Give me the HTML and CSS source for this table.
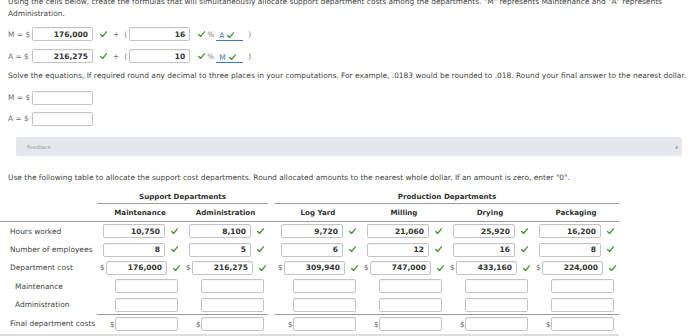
FILE: index.html
```html
<!DOCTYPE html>
<html>
<head>
<meta charset="utf-8">
<link rel="stylesheet" href="styles.css">
</head>
<body>
<div class="page">
  <p class="intro">Using the cells below, create the formulas that will simultaneously allocate support department costs among the departments. "M" represents Maintenance and "A" represents<br>Administration.</p>

  <div class="eq-row">
    <span class="lbl">M = $</span>
    <span class="box eq-box">176,000</span>
    <svg class="chk g7" viewBox="0 0 7 6"><polyline points="0.6,3.2 2.6,5.2 6.4,0.6"/></svg>
    <span class="op g6">+</span>
    <span class="op g5">(</span>
    <span class="box eq-box g2">16</span>
    <svg class="chk g8" viewBox="0 0 7 6"><polyline points="0.6,3.2 2.6,5.2 6.4,0.6"/></svg>
    <span class="op g2">%</span>
    <span class="ref g2"><span class="ref-letter">A</span><svg class="chk" viewBox="0 0 7 6"><polyline points="0.6,3.2 2.6,5.2 6.4,0.6"/></svg></span>
    <span class="op g5">)</span>
  </div>

  <div class="eq-row">
    <span class="lbl">A = $</span>
    <span class="box eq-box">216,275</span>
    <svg class="chk g7" viewBox="0 0 7 6"><polyline points="0.6,3.2 2.6,5.2 6.4,0.6"/></svg>
    <span class="op g6">+</span>
    <span class="op g5">(</span>
    <span class="box eq-box g2">10</span>
    <svg class="chk g8" viewBox="0 0 7 6"><polyline points="0.6,3.2 2.6,5.2 6.4,0.6"/></svg>
    <span class="op g2">%</span>
    <span class="ref g2"><span class="ref-letter">M</span><svg class="chk" viewBox="0 0 7 6"><polyline points="0.6,3.2 2.6,5.2 6.4,0.6"/></svg></span>
    <span class="op g5">)</span>
  </div>

  <p class="solve">Solve the equations, If required round any decimal to three places in your computations. For example, .0183 would be rounded to .018. Round your final answer to the nearest dollar.</p>

  <div class="ans-row"><span class="lbl">M = $</span><span class="box eq-box"></span></div>
  <div class="ans-row"><span class="lbl">A = $</span><span class="box eq-box"></span></div>

  <div class="feedback"><span class="fb-text">Feedback</span><span class="caret">&#9650;</span></div>

  <p class="instr">Use the following table to allocate the support cost departments. Round allocated amounts to the nearest whole dollar. If an amount is zero, enter "0".</p>

  <div class="table">
    <div class="row group-row">
      <div></div>
      <div class="group support">Support Departments</div>
      <div></div>
      <div class="group production">Production Departments</div>
    </div>
    <div class="row head-row">
      <div></div>
      <div class="colh">Maintenance</div>
      <div class="colh">Administration</div>
      <div></div>
      <div class="colh">Log Yard</div>
      <div class="colh">Milling</div>
      <div class="colh">Drying</div>
      <div class="colh">Packaging</div>
    </div>

    <div class="row data-row">
      <div class="rlabel">Hours worked</div>
      <div class="cell c-val"><span class="box tb-box">10,750</span><svg class="chk" viewBox="0 0 7 6"><polyline points="0.6,3.2 2.6,5.2 6.4,0.6"/></svg></div>
      <div class="cell c-val"><span class="box tb-box">8,100</span><svg class="chk" viewBox="0 0 7 6"><polyline points="0.6,3.2 2.6,5.2 6.4,0.6"/></svg></div>
      <div></div>
      <div class="cell c-val"><span class="box tb-box">9,720</span><svg class="chk" viewBox="0 0 7 6"><polyline points="0.6,3.2 2.6,5.2 6.4,0.6"/></svg></div>
      <div class="cell c-val"><span class="box tb-box">21,060</span><svg class="chk" viewBox="0 0 7 6"><polyline points="0.6,3.2 2.6,5.2 6.4,0.6"/></svg></div>
      <div class="cell c-val"><span class="box tb-box">25,920</span><svg class="chk" viewBox="0 0 7 6"><polyline points="0.6,3.2 2.6,5.2 6.4,0.6"/></svg></div>
      <div class="cell c-val"><span class="box tb-box">16,200</span><svg class="chk" viewBox="0 0 7 6"><polyline points="0.6,3.2 2.6,5.2 6.4,0.6"/></svg></div>
    </div>

    <div class="row data-row">
      <div class="rlabel">Number of employees</div>
      <div class="cell c-val"><span class="box tb-box">8</span><svg class="chk" viewBox="0 0 7 6"><polyline points="0.6,3.2 2.6,5.2 6.4,0.6"/></svg></div>
      <div class="cell c-val"><span class="box tb-box">5</span><svg class="chk" viewBox="0 0 7 6"><polyline points="0.6,3.2 2.6,5.2 6.4,0.6"/></svg></div>
      <div></div>
      <div class="cell c-val"><span class="box tb-box">6</span><svg class="chk" viewBox="0 0 7 6"><polyline points="0.6,3.2 2.6,5.2 6.4,0.6"/></svg></div>
      <div class="cell c-val"><span class="box tb-box">12</span><svg class="chk" viewBox="0 0 7 6"><polyline points="0.6,3.2 2.6,5.2 6.4,0.6"/></svg></div>
      <div class="cell c-val"><span class="box tb-box">16</span><svg class="chk" viewBox="0 0 7 6"><polyline points="0.6,3.2 2.6,5.2 6.4,0.6"/></svg></div>
      <div class="cell c-val"><span class="box tb-box">8</span><svg class="chk" viewBox="0 0 7 6"><polyline points="0.6,3.2 2.6,5.2 6.4,0.6"/></svg></div>
    </div>

    <div class="row data-row">
      <div class="rlabel">Department cost</div>
      <div class="cell c-cost"><span class="dol">$</span><span class="box cost-box">176,000</span><svg class="chk" viewBox="0 0 7 6"><polyline points="0.6,3.2 2.6,5.2 6.4,0.6"/></svg></div>
      <div class="cell c-cost"><span class="dol">$</span><span class="box cost-box">216,275</span><svg class="chk" viewBox="0 0 7 6"><polyline points="0.6,3.2 2.6,5.2 6.4,0.6"/></svg></div>
      <div></div>
      <div class="cell c-cost"><span class="dol">$</span><span class="box cost-box">309,940</span><svg class="chk" viewBox="0 0 7 6"><polyline points="0.6,3.2 2.6,5.2 6.4,0.6"/></svg></div>
      <div class="cell c-cost"><span class="dol">$</span><span class="box cost-box">747,000</span><svg class="chk" viewBox="0 0 7 6"><polyline points="0.6,3.2 2.6,5.2 6.4,0.6"/></svg></div>
      <div class="cell c-cost"><span class="dol">$</span><span class="box cost-box">433,160</span><svg class="chk" viewBox="0 0 7 6"><polyline points="0.6,3.2 2.6,5.2 6.4,0.6"/></svg></div>
      <div class="cell c-cost"><span class="dol">$</span><span class="box cost-box">224,000</span><svg class="chk" viewBox="0 0 7 6"><polyline points="0.6,3.2 2.6,5.2 6.4,0.6"/></svg></div>
    </div>

    <div class="row data-row">
      <div class="rlabel indent">Maintenance</div>
      <div class="cell c-alloc"><span class="dol hidden">$</span><span class="box alloc-box"></span></div>
      <div class="cell c-alloc"><span class="dol hidden">$</span><span class="box alloc-box"></span></div>
      <div></div>
      <div class="cell c-alloc"><span class="dol hidden">$</span><span class="box alloc-box"></span></div>
      <div class="cell c-alloc"><span class="dol hidden">$</span><span class="box alloc-box"></span></div>
      <div class="cell c-alloc"><span class="dol hidden">$</span><span class="box alloc-box"></span></div>
      <div class="cell c-alloc"><span class="dol hidden">$</span><span class="box alloc-box"></span></div>
    </div>

    <div class="row data-row">
      <div class="rlabel indent">Administration</div>
      <div class="cell c-alloc"><span class="dol hidden">$</span><span class="box alloc-box"></span></div>
      <div class="cell c-alloc"><span class="dol hidden">$</span><span class="box alloc-box"></span></div>
      <div></div>
      <div class="cell c-alloc"><span class="dol hidden">$</span><span class="box alloc-box"></span></div>
      <div class="cell c-alloc"><span class="dol hidden">$</span><span class="box alloc-box"></span></div>
      <div class="cell c-alloc"><span class="dol hidden">$</span><span class="box alloc-box"></span></div>
      <div class="cell c-alloc"><span class="dol hidden">$</span><span class="box alloc-box"></span></div>
    </div>

    <div class="row data-row final-row">
      <div class="rlabel">Final department costs</div>
      <div class="cell c-alloc topline"><span class="dol">$</span><span class="box alloc-box"></span></div>
      <div class="cell c-alloc topline"><span class="dol">$</span><span class="box alloc-box"></span></div>
      <div></div>
      <div class="cell c-alloc topline"><span class="dol">$</span><span class="box alloc-box"></span></div>
      <div class="cell c-alloc topline"><span class="dol">$</span><span class="box alloc-box"></span></div>
      <div class="cell c-alloc topline"><span class="dol">$</span><span class="box alloc-box"></span></div>
      <div class="cell c-alloc topline"><span class="dol">$</span><span class="box alloc-box"></span></div>
    </div>
  </div>
</div>
</body>
</html>
```

FILE: styles.css
```css
html, body {
  margin: 0;
  padding: 0;
  background: #ffffff;
}

.page {
  font-family: "DejaVu Sans", Verdana, sans-serif;
  font-size: 7.45px;
  color: #464646;
  padding: 0 8px;
  margin-top: -4px;
  overflow: hidden;
}

p {
  margin: 0;
}

.intro {
  line-height: 12px;
  white-space: nowrap;
}

.eq-row,
.ans-row {
  display: flex;
  align-items: center;
  height: 22px;
}

.intro + .eq-row {
  margin-top: 3px;
}

.ans-row {
  height: 21px;
}

.lbl {
  color: #707070;
  flex: none;
  width: 22px;
  margin-right: 2px;
  white-space: nowrap;
}

.box {
  display: inline-flex;
  align-items: center;
  justify-content: flex-end;
  flex: none;
  box-sizing: border-box;
  height: 14px;
  border: 1px solid #c4c4c4;
  border-radius: 2px;
  background: #fff;
  padding-right: 4px;
  font-weight: bold;
  font-size: 7.5px;
  color: #333;
  box-shadow: inset 0 1px 1px rgba(0, 0, 0, 0.04);
}

.eq-box {
  width: 61px;
}

.chk {
  width: 7px;
  height: 6.5px;
  flex: none;
  fill: none;
  stroke: #4d9a3d;
  stroke-width: 1.4;
  stroke-linecap: round;
  stroke-linejoin: round;
}

.op {
  color: #777;
}

.g2 { margin-left: 2px; }
.g5 { margin-left: 5px; }
.g6 { margin-left: 6px; }
.g7 { margin-left: 7px; }
.g8 { margin-left: 8px; }

.ref {
  display: inline-flex;
  align-items: center;
  width: 27px;
  box-sizing: border-box;
  padding-left: 3px;
  gap: 3px;
  border-bottom: 1px solid #3b78c0;
  height: 10px;
  margin-top: 3px;
}

.ref-letter {
  color: #3b78c0;
  font-size: 7.4px;
}

.solve {
  line-height: 12px;
  margin-top: 3px;
  white-space: nowrap;
}

.solve + .ans-row {
  margin-top: 5px;
}

.feedback {
  display: flex;
  align-items: center;
  justify-content: space-between;
  height: 19px;
  margin: 8px 10px 0 8px;
  background: #e4e8ec;
  border-radius: 2px;
  padding: 0 4px 0 11px;
}

.fb-text {
  font-size: 5px;
  color: #8b97a2;
}

.caret {
  font-size: 4px;
  color: #9aa4ad;
}

.instr {
  line-height: 12px;
  margin-top: 16px;
  white-space: nowrap;
}

.table {
  margin-left: -8px;
  width: 619px;
  margin-top: 6px;
  border-bottom: 3px solid #dedede;
}

.row {
  display: grid;
  grid-template-columns: 97px 86px 85px 7px 86px 86px 86px 86px;
  align-items: center;
}

.group-row {
  height: 14px;
  font-weight: bold;
  font-size: 7.1px;
  color: #333;
}

.group {
  text-align: center;
  height: 14px;
  line-height: 13px;
  border-bottom: 1px solid #9a9a9a;
  box-sizing: border-box;
}

.support {
  grid-column: 2 / 4;
}

.production {
  grid-column: 5 / 9;
}

.head-row {
  height: 17px;
  border-bottom: 1px solid #9a9a9a;
  font-weight: bold;
  font-size: 7.1px;
  color: #333;
}

.colh {
  text-align: center;
}

.data-row {
  height: 18.4px;
}

.rlabel {
  padding-left: 10px;
  white-space: nowrap;
}

.rlabel.indent {
  padding-left: 15px;
}

.cell {
  display: flex;
  align-items: center;
  height: 100%;
  box-sizing: border-box;
}

.c-val {
  padding-left: 6px;
  gap: 6px;
}

.tb-box {
  width: 62px;
}

.c-cost {
  padding-left: 3px;
  gap: 2px;
}

.cost-box {
  width: 61px;
  margin-right: 4px;
}

.dol {
  color: #666;
  width: 4px;
  flex: none;
}

.hidden {
  visibility: hidden;
}

.c-alloc {
  padding-left: 13px;
  gap: 1px;
}

.alloc-box {
  width: 63px;
}

.final-row {
  height: 20px;
}

.topline {
  border-top: 1px solid #9a9a9a;
}
```
